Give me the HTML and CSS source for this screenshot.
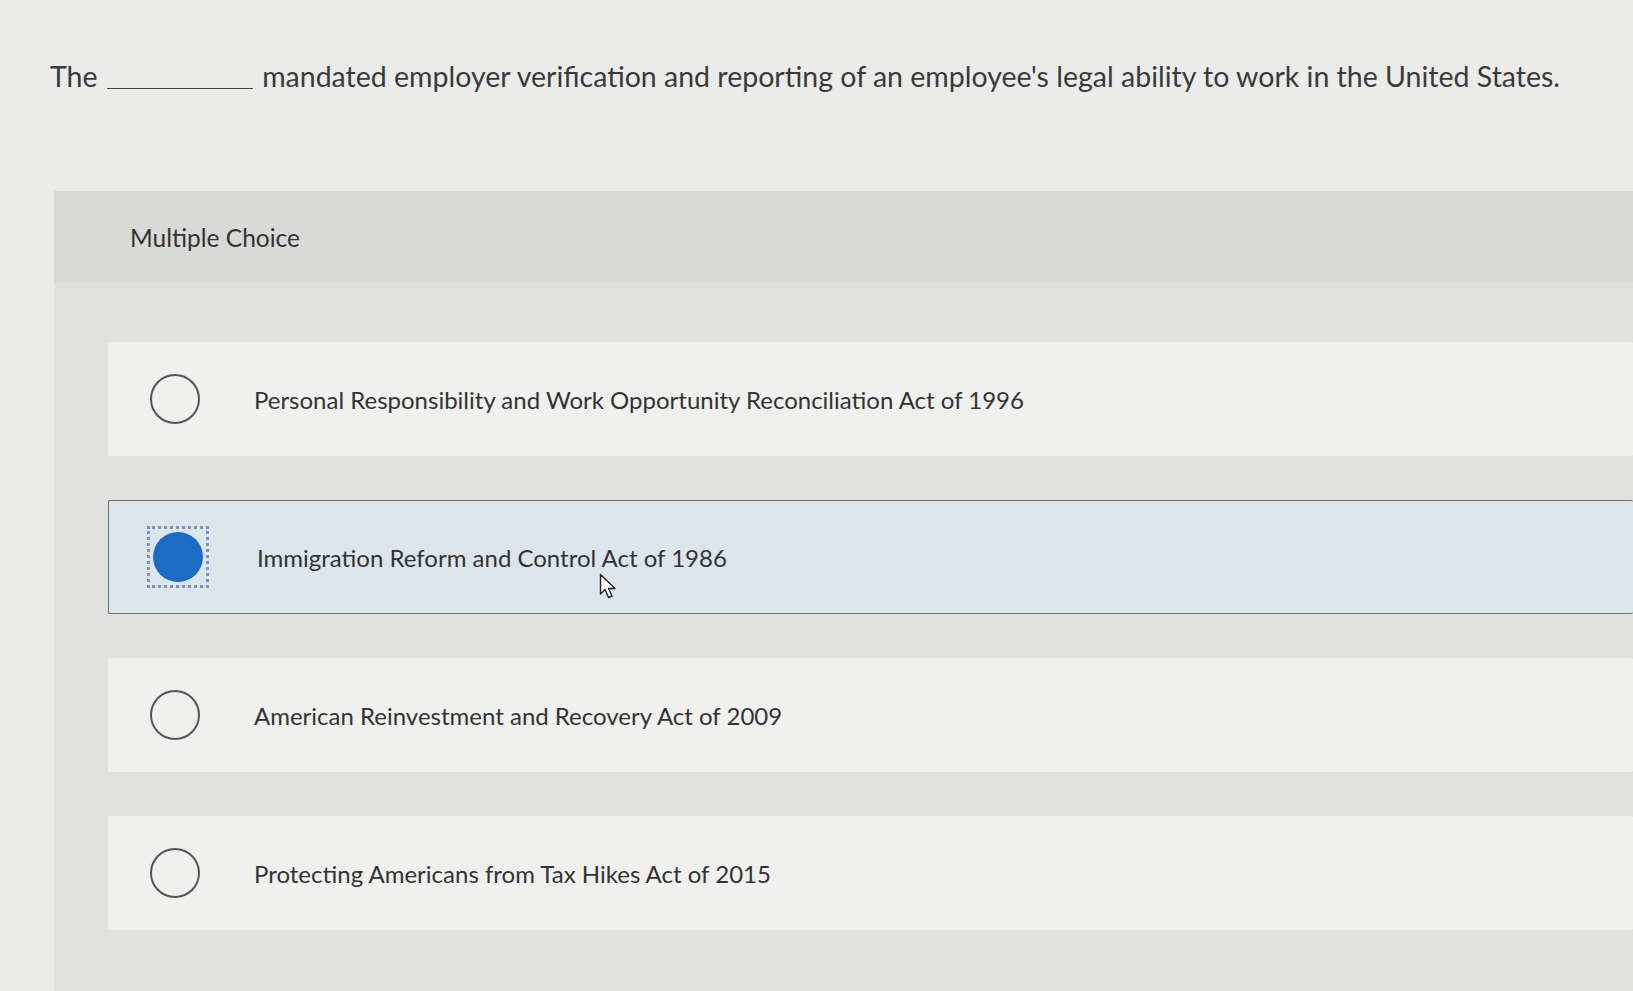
FILE: index.html
```html
<!DOCTYPE html>
<html lang="en">
<head>
<meta charset="utf-8">
<title>Multiple Choice</title>
<link rel="stylesheet" href="styles.css">
</head>
<body>
<div class="page">
  <p class="question">The <span class="blank"></span> mandated employer verification and reporting of an employee's legal ability to work in the United States.</p>

  <section class="panel">
    <header class="panel-head">Multiple Choice</header>
    <div class="options">
      <label class="option">
        <span class="radio"></span>
        <span class="opt-text">Personal Responsibility and Work Opportunity Reconciliation Act of 1996</span>
      </label>
      <label class="option selected">
        <span class="focus"><span class="radio filled"></span></span>
        <span class="opt-text">Immigration Reform and Control Act of 1986</span>
        <svg class="cursor" width="20" height="28" viewBox="0 0 20 28"><path d="M1.5 1.5 L1.5 21 L6 16.5 L9.5 24.5 L13 23 L9.5 15.5 L16 15.5 Z" fill="#fff" stroke="#222" stroke-width="1.4" stroke-linejoin="round"/></svg>
      </label>
      <label class="option">
        <span class="radio"></span>
        <span class="opt-text">American Reinvestment and Recovery Act of 2009</span>
      </label>
      <label class="option">
        <span class="radio"></span>
        <span class="opt-text">Protecting Americans from Tax Hikes Act of 2015</span>
      </label>
    </div>
  </section>
</div>
</body>
</html>
```

FILE: styles.css
```css
* { box-sizing: border-box; }
html, body {
  margin: 0;
  padding: 0;
  background: #ebebea;
  font-family: "Lato", "Liberation Sans", sans-serif;
  color: #333;
  overflow: hidden;
}
.page {
  width: 1633px;
  height: 991px;
  padding-top: 58px;
}
.question {
  margin: 0;
  padding-left: 50px;
  font-size: 28.5px;
  line-height: 36px;
  color: #3a3a3a;
  white-space: nowrap;
}
.blank {
  display: inline-block;
  width: 146px;
  height: 1px;
  border-bottom: 1.5px solid #444;
  margin: 0 2px;
  vertical-align: -2px;
}
.panel {
  margin-top: 97px;
  margin-left: 54px;
  background: #e0e0df;
  height: 820px;
}
.panel-head {
  height: 92px;
  padding-left: 76px;
  display: flex;
  align-items: center;
  font-size: 24.5px;
  color: #333;
  background: #d9d9d8;
}
.options {
  padding: 59px 0 0 54px;
  display: flex;
  flex-direction: column;
  gap: 44px;
}
.option {
  position: relative;
  height: 114px;
  background: #f0f0ef;
  display: flex;
  align-items: center;
  padding-left: 42px;
  border-radius: 2px;
}
.option.selected {
  background: #dde5ec;
  border: 1.5px solid #6b7179;
  border-right: none;
  padding-left: 38px;
}
.radio {
  flex: none;
  width: 50px;
  height: 50px;
  border: 2px solid #555;
  border-radius: 50%;
  background: transparent;
  margin-right: 54px;
}
.radio.filled {
  border: none;
  background: #1d6cc4;
  width: 50px;
  height: 50px;
  margin-right: 0;
}
.focus {
  flex: none;
  width: 62px;
  height: 62px;
  border: 3px dotted #7793c0;
  display: flex;
  align-items: center;
  justify-content: center;
  margin-right: 48px;
}
.opt-text {
  font-size: 24px;
  color: #333;
  white-space: nowrap;
}
.cursor {
  position: absolute;
  left: 490px;
  top: 72px;
}
```
